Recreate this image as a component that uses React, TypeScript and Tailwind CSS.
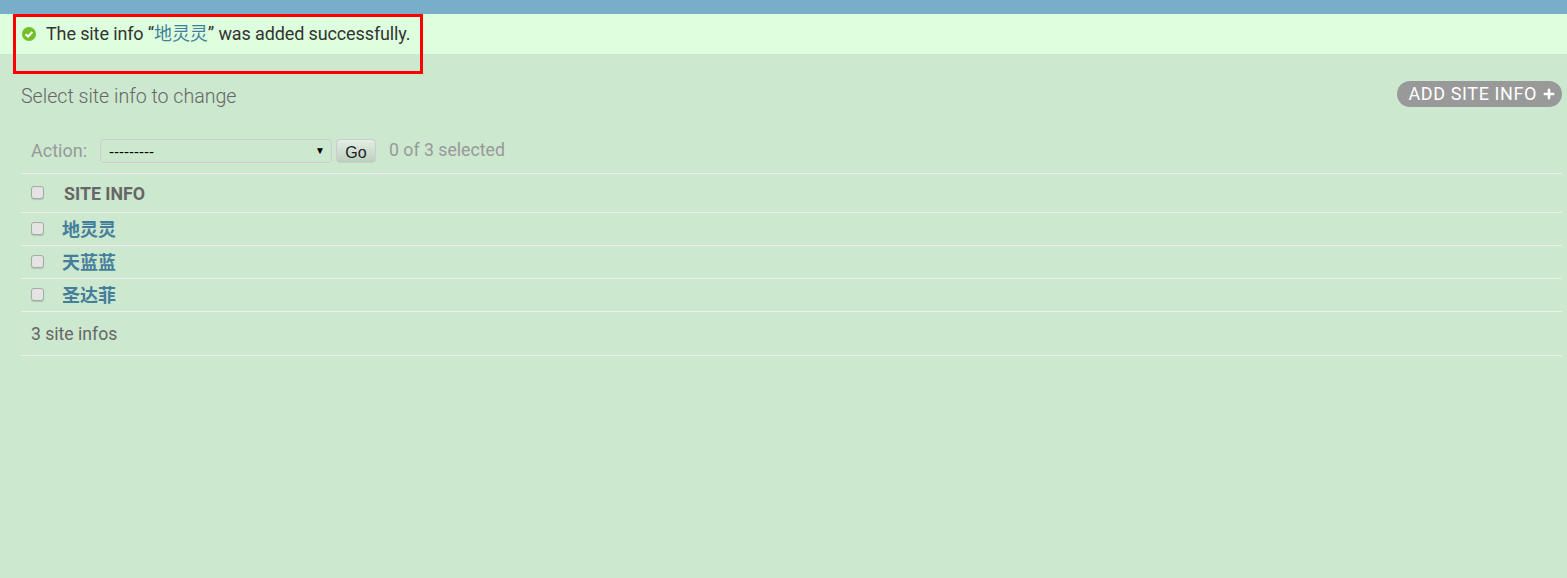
const font = "font-['Roboto','Noto_Sans_CJK_SC',sans-serif]"

const rows = ['地灵灵', '天蓝蓝', '圣达菲']

function Check() {
  return (
    <span className="block mb-[2px] w-[13px] h-[13px] rounded-[3px] bg-[#e4e4e4] border border-[#a9a9a9] shadow-[0_1px_1px_rgba(0,0,0,0.15)]" />
  )
}

export default function App() {
  return (
    <div className={`${font} relative h-[578px] overflow-hidden bg-[#cce8cf]`}>
      {/* Header strip */}
      <div className="h-[14px] bg-[#79aec8]" />

      {/* Success message */}
      <div className="h-[40px] bg-[#ddffdd] pl-[22px] pt-[9px] flex items-start gap-[10px] text-[#333] text-[18px] tracking-[-0.12px] leading-[22px]">
        <svg viewBox="0 0 14 14" className="w-[14px] h-[14px] mt-[4px] shrink-0">
          <circle cx="7" cy="7" r="7" fill="#70bf2b" />
          <path d="M3.6 7.2 6 9.6 10.4 5" fill="none" stroke="#fff" strokeWidth="2" />
        </svg>
        <span>
          The site info “<a className="text-[#447e9b]">地灵灵</a>” was added successfully.
        </span>
      </div>

      {/* Red annotation */}
      <div className="absolute left-[13px] top-[14px] w-[410px] h-[60px] border-[3px] border-[#ff0000] pointer-events-none" />

      <div className="pl-[21px] pr-[5px]">
        <div className="flex items-start justify-between pt-[27px] h-[67px]">
          <h1 className="text-[19.6px] leading-[32px] font-light text-[#666]">Select site info to change</h1>
          <a className="h-[26px] rounded-[13px] bg-[#999] text-white text-[18px] leading-[26px] pl-[12px] pr-[7px] tracking-[0.6px] flex items-center gap-[6px]">
            ADD SITE INFO
            <svg viewBox="0 0 10 10" className="w-[12px] h-[12px]">
              <path d="M5 1.5v7M1.5 5h7" stroke="#fff" strokeWidth="2.2" strokeLinecap="round" />
            </svg>
          </a>
        </div>

        {/* Action bar */}
        <div className="h-[53px] pl-[10px] pt-[18px] flex items-start text-[#999] border-b border-[#eee]">
          <span className="text-[18px] leading-[24px] w-[69px]">Action:</span>
          <div className="relative w-[232px] h-[24px] border border-[#ccc] rounded-[4px] font-['Liberation_Sans',sans-serif] text-[#000] text-[15px] leading-[24px] pl-[8px]">
            ---------
            <span className="absolute right-[6px] top-[0px] text-[10px] leading-[22px]">▼</span>
          </div>
          <button className="ml-[4px] w-[40px] h-[24px] rounded-[4px] border border-[#ccc] bg-gradient-to-b from-[#e4eee4] to-[#bcd0bf] text-[#222] font-['Liberation_Sans',sans-serif] text-[16px] leading-[26px]">
            Go
          </button>
          <span className="ml-[13px] text-[17.7px] leading-[22px]">0 of 3 selected</span>
        </div>

        {/* Table header */}
        <div className="h-[39px] pl-[10px] flex items-center border-b border-[#eee]">
          <Check />
          <span className="ml-[20px] mt-[2px] text-[17.8px] font-bold text-[#666]">SITE INFO</span>
        </div>

        {rows.map((name) => (
          <div key={name} className="h-[33px] pl-[10px] flex items-center border-b border-[#eee]">
            <Check />
            <a className="ml-[18px] text-[18px] font-bold text-[#447e9b]">{name}</a>
          </div>
        ))}

        <div className="h-[44px] pl-[10px] pt-[2px] flex items-center border-b border-[#eee] text-[17.6px] text-[#666]">
          3 site infos
        </div>
      </div>
    </div>
  )
}
